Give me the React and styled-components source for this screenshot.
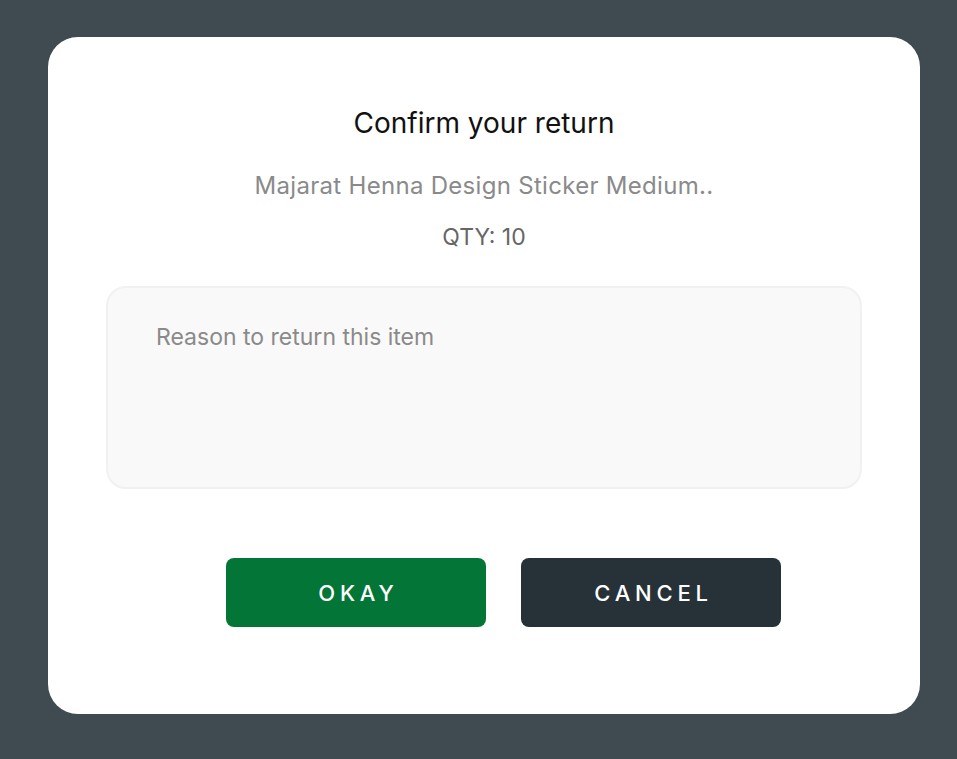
import React from 'react'
import styled, { createGlobalStyle } from 'styled-components'

const Global = createGlobalStyle`
  html, body {
    margin: 0;
    padding: 0;
    background: #3f4b50;
    font-family: Inter, "Noto Sans", sans-serif;
  }
`

export default function App() {
  return (
    <>
      <Global />
      <Backdrop>
        <Modal>
          <Title>Confirm your return</Title>
          <ProductName>Majarat Henna Design Sticker Medium..</ProductName>
          <Qty>QTY: 10</Qty>
          <Reason placeholder="Reason to return this item" />
          <Actions>
            <ActionButton $variant="ok">OKAY</ActionButton>
            <ActionButton $variant="cancel">CANCEL</ActionButton>
          </Actions>
        </Modal>
      </Backdrop>
    </>
  )
}

const Backdrop = styled.div`
  width: 957px;
  height: 759px;
  padding: 37px 0 0 48px;
  box-sizing: border-box;
`

const Modal = styled.div`
  width: 872px;
  height: 677px;
  box-sizing: border-box;
  background: #ffffff;
  border-radius: 30px;
  display: flex;
  flex-direction: column;
  align-items: center;
  padding: 70px 58px 0;
`

const Title = styled.h2`
  margin: 0;
  font-size: 28px;
  line-height: 32px;
  font-weight: 400;
  color: #111;
`

const ProductName = styled.p`
  margin: 32px 0 0;
  font-size: 24px;
  line-height: 30px;
  letter-spacing: 0.3px;
  color: #8a8a8a;
`

const Qty = styled.p`
  margin: 21px 0 0;
  font-size: 23px;
  line-height: 30px;
  color: #666;
`

const Reason = styled.textarea`
  margin-top: 34px;
  width: 756px;
  height: 203px;
  box-sizing: border-box;
  background: #f9f9f9;
  border: 2px solid #f1f1f1;
  border-radius: 20px;
  padding: 34px 48px;
  resize: none;
  font-family: Inter, "Noto Sans", sans-serif;
  font-size: 23px;
  line-height: 30px;
  color: #333;
  outline: none;

  &::placeholder {
    color: #8a8a8a;
  }
`

const Actions = styled.div`
  margin-top: 69px;
  display: flex;
  gap: 35px;
  padding-left: 39px;
`

const ActionButton = styled.button`
  width: 260px;
  height: 69px;
  border: none;
  border-radius: 8px;
  padding: 0 0 0 5px;
  background: ${p => (p.$variant === 'ok' ? '#037536' : '#263238')};
  color: #fff;
  font-family: Inter, "Noto Sans", sans-serif;
  font-size: 22px;
  font-weight: 500;
  letter-spacing: 4.8px;
  cursor: pointer;
`
